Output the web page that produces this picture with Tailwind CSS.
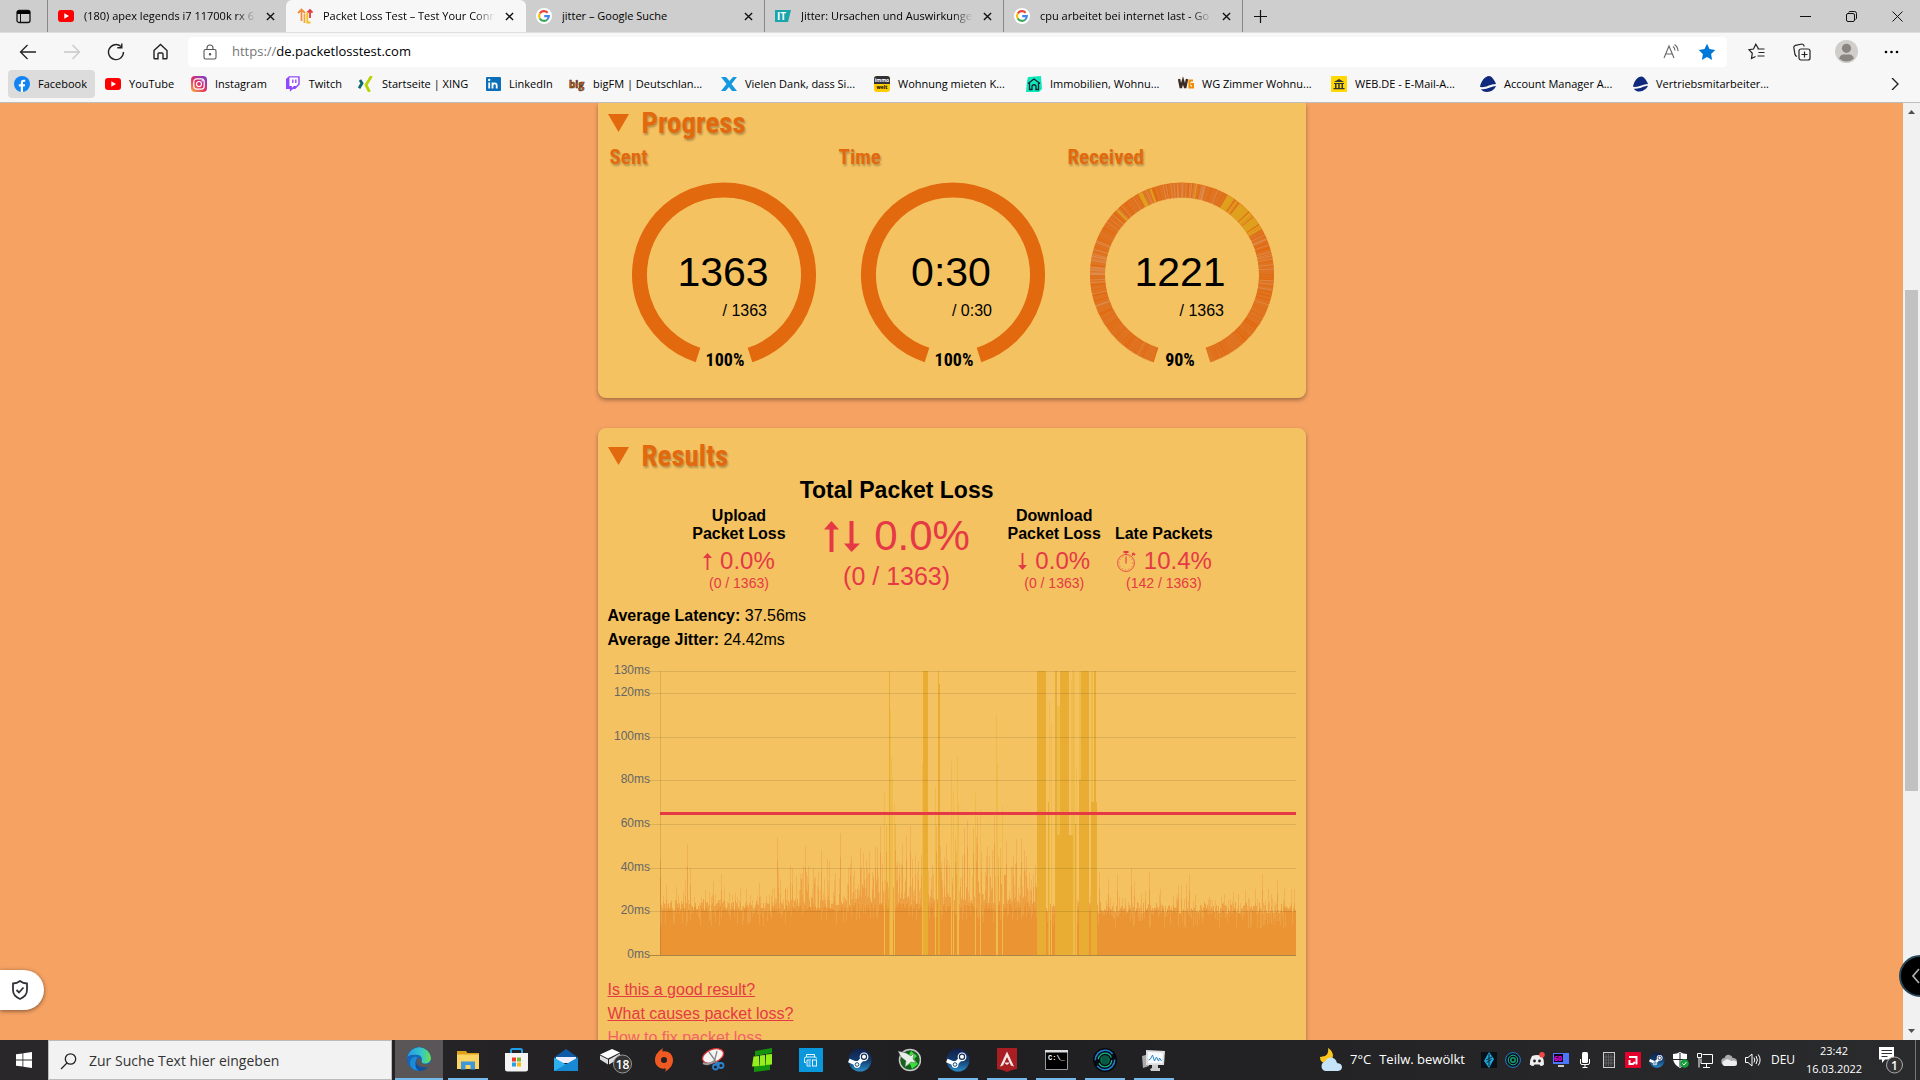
<!DOCTYPE html>
<html lang="de">
<head>
  <meta charset="UTF-8" />
  <meta name="viewport" content="width=device-width, initial-scale=1.0" />
  <title>Packet Loss Test – Test Your Connection</title>
  <script src="https://cdn.jsdelivr.net/npm/@tailwindcss/browser@4"></script>
</head>
<body class="h-screen flex flex-col overflow-hidden bg-[#f7f7f7] text-black font-['Open_Sans',sans-serif]">

  <!-- shared icons -->
  <svg class="absolute size-0">
    <defs><linearGradient id="st" x2="0" y2="1"><stop stop-color="#12204a" /><stop offset=".5" stop-color="#123a6b" /><stop offset="1" stop-color="#2a8cc8" /></linearGradient></defs>
    <symbol id="youtube" viewBox="0 0 16 16"><rect y="2" width="16" height="12" rx="3" fill="#f00" /><path d="M6.3 5.2v5.6L11 8z" fill="#fff" /></symbol>
    <symbol id="google" viewBox="0 0 16 16">
      <circle cx="8" cy="8" r="8" fill="#fff" />
      <g fill="none" stroke-width="2.1"><path d="M11.6 4.7A4.9 4.9 0 0 0 3.8 5.5" stroke="#ea4335" /><path d="M3.8 5.5a4.9 4.9 0 0 0 0 5" stroke="#fbbc05" /><path d="M3.8 10.5a4.9 4.9 0 0 0 7.4 1.2" stroke="#34a853" /><path d="M11.2 11.7A4.9 4.9 0 0 0 12.9 8.1H8.2" stroke="#4285f4" /></g>
    </symbol>
    <symbol id="close" viewBox="0 0 10 10"><path d="M1 1l8 8M9 1L1 9" stroke="#111" stroke-width="1.5" /></symbol>
    <symbol id="steam" viewBox="0 0 24 24">
      <circle cx="12" cy="12" r="11.5" fill="url(#st)" />
      <path d="M.8 12.5l8.5 3.6 5-5" stroke="#fff" stroke-width="4" fill="none" />
      <circle cx="16" cy="8.8" r="4.4" fill="#fff" /><circle cx="16" cy="8.8" r="2.6" fill="none" stroke="#123055" stroke-width="1.2" />
      <circle cx="9" cy="16.5" r="3.4" fill="#fff" /><circle cx="9" cy="16.5" r="1.8" fill="none" stroke="#14527f" stroke-width="1" />
    </symbol>
    <symbol id="stepstone" viewBox="0 0 16 16"><path d="M0 11C1 5 5 0 9 0c3 0 6 5 7 8-6 0-10 4-16 3zM1 13c6 1 9-2.5 15-3-1 3-5 6-9 6-3 0-5-1-6-3z" fill="#10297c" /></symbol>
  </svg>

  <!-- tab strip -->
  <header class="h-8 shrink-0 flex bg-[#cecece] text-[11px]">
    <button class="w-[47px] flex items-center justify-center" aria-label="Tab-Aktionen">
      <svg class="w-[15px] h-[15px]" viewBox="0 0 15 15"><rect x="1" y="1.5" width="13" height="12" rx="2" fill="none" stroke="#111" stroke-width="1.3" /><path d="M1 2h13v3H1z" /><path d="M4.5 5v8" stroke="#111" /></svg>
    </button>
    <nav class="flex">
      <div class="w-[239px] flex items-center gap-2.5 pl-[10px] pr-[11px] border-l border-[#888] bg-[#cecece]">
        <svg class="size-4 shrink-0"><use href="#youtube" /></svg>
        <span class="flex-1 overflow-hidden whitespace-nowrap [mask-image:linear-gradient(90deg,#000_88%,transparent)]">(180) apex legends i7 11700k rx 6</span>
        <button aria-label="Schließen"><svg class="size-[9px]"><use href="#close" /></svg></button>
      </div>
      <div class="w-[240px] flex items-center gap-2.5 pl-[11px] pr-3 rounded-t-md bg-[#f7f7f7]">
        <svg class="size-4 shrink-0" viewBox="0 0 16 16" fill="none" stroke-width="1.8"><path d="M4.500 13V2M1 5l3.500-3.500L8 5" stroke="#f28c3c" /><path d="M7.500 6v9" stroke="#f4a940" /><path d="M13 2v8M10.500 4.500L13 2l2.500 2.500" stroke="#e63946" /><path d="M10.300 4v10.500h3.200" stroke="#f4c020" /></svg>
        <span class="flex-1 overflow-hidden whitespace-nowrap [mask-image:linear-gradient(90deg,#000_88%,transparent)]">Packet Loss Test – Test Your Conn</span>
        <button aria-label="Schließen"><svg class="size-[9px]"><use href="#close" /></svg></button>
      </div>
      <div class="w-[238px] flex items-center gap-2.5 pl-[10px] pr-[11px]">
        <svg class="size-4 shrink-0"><use href="#google" /></svg>
        <span class="flex-1 overflow-hidden whitespace-nowrap">jitter – Google Suche</span>
        <button aria-label="Schließen"><svg class="size-[9px]"><use href="#close" /></svg></button>
      </div>
      <div class="w-[239px] flex items-center gap-2.5 pl-[10px] pr-[11px] border-l border-[#888]">
        <svg class="size-4 shrink-0" viewBox="0 0 16 16"><path d="M0 2h16l-3 12H0z" fill="#18a5ab" /><text x="2" y="12" class="text-[10px] font-bold fill-white">IT</text></svg>
        <span class="flex-1 overflow-hidden whitespace-nowrap [mask-image:linear-gradient(90deg,#000_88%,transparent)]">Jitter: Ursachen und Auswirkunge</span>
        <button aria-label="Schließen"><svg class="size-[9px]"><use href="#close" /></svg></button>
      </div>
      <div class="w-[240px] flex items-center gap-2.5 pl-[10px] pr-[11px] border-x border-[#888]">
        <svg class="size-4 shrink-0"><use href="#google" /></svg>
        <span class="flex-1 overflow-hidden whitespace-nowrap [mask-image:linear-gradient(90deg,#000_88%,transparent)]">cpu arbeitet bei internet last - Go</span>
        <button aria-label="Schließen"><svg class="size-[9px]"><use href="#close" /></svg></button>
      </div>
    </nav>
    <button class="w-[34px] flex items-center justify-center" aria-label="Neuer Tab"><svg class="size-[15px]" viewBox="0 0 15 15"><path d="M7.5 1v13M1 7.5h13" stroke="#111" stroke-width="1.2" /></svg></button>
    <div class="ml-auto flex">
      <button class="w-[46px] flex items-center justify-center" aria-label="Minimieren"><svg class="size-[11px]" viewBox="0 0 11 11"><path d="M0 5.5h11" stroke="#111" /></svg></button>
      <button class="w-[46px] flex items-center justify-center" aria-label="Verkleinern"><svg class="size-[11px]" viewBox="0 0 11 11" fill="none" stroke="#111"><rect x=".5" y="2.5" width="8" height="8" rx="1.5" /><path d="M2.5 1.5Q3 .5 4 .5h4.500q2 0 2 2V7q0 1-1 1.500" /></svg></button>
      <button class="w-[46px] flex items-center justify-center" aria-label="Fenster schließen"><svg class="size-[11px]" viewBox="0 0 11 11"><path d="M.5 .5l10 10M10.5 .5l-10 10" stroke="#111" /></svg></button>
    </div>
  </header>

  <!-- address bar -->
  <div class="h-[38px] shrink-0 flex items-center pl-1.5 pr-[6px] border-t border-[#dedede]">
    <button class="w-11 flex justify-center" aria-label="Zurück"><svg class="size-[18px]" viewBox="0 0 18 18" fill="none" stroke="#222" stroke-width="1.3"><path d="M17 9H2M8.5 2L1.5 9l7 7" /></svg></button>
    <button class="w-11 flex justify-center" aria-label="Vorwärts"><svg class="size-[18px]" viewBox="0 0 18 18" fill="none" stroke="#c8c8c8" stroke-width="1.3"><path d="M1 9h15M9.5 2l7 7-7 7" /></svg></button>
    <button class="w-11 flex justify-center" aria-label="Aktualisieren"><svg class="size-[18px]" viewBox="0 0 18 18" fill="none" stroke="#222" stroke-width="1.4"><path d="M16.5 9A7.5 7.5 0 1 1 14 3.5M14.8 .5v4.300h-4.500" /></svg></button>
    <button class="w-11 flex justify-center" aria-label="Startseite"><svg class="size-[17px]" viewBox="0 0 17 17" fill="none" stroke="#222" stroke-width="1.4"><path d="M2 7.5L8.500 1.500 15 7.500V15q0 .8-.8.8H11V11q0-1-1-1H7q-1 0-1 1v4.800H2.800Q2 15.800 2 15z" /></svg></button>
    <div class="ml-1.5 h-[30px] flex-1 flex items-center rounded bg-white pl-[15px] pr-0.5 text-[13px]">
      <svg class="w-3.5 h-4 shrink-0" viewBox="0 0 14 16" fill="none" stroke="#555" stroke-width="1.1"><rect x="1" y="5.5" width="12" height="9.5" rx="1.5" /><path d="M4 5.500V4a3 3 0 0 1 6 0v1.500" /><circle cx="7" cy="10.3" r=".7" fill="#555" /></svg>
      <label for="url" class="ml-[15px] text-[#767676]">https://</label>
      <input id="url" type="text" value="de.packetlosstest.com" class="flex-1 min-w-0 outline-none" />
      <button class="w-9 flex justify-center" aria-label="Laut vorlesen"><svg class="size-[17px]" viewBox="0 0 17 17" fill="none" stroke="#666" stroke-width="1.1"><path d="M1 15L6 3l5 12M2.700 11h6.600M10 3.500q2 1.500 2 4M11.500 1.500Q15 4 15 8" /></svg></button>
      <button class="w-9 flex justify-center" aria-label="Favorit"><svg class="size-[18px]" viewBox="0 0 18 18"><path d="M9 .8l2.500 5.300 5.800.8-4.200 4.100 1 5.900L9 14.100l-5.100 2.800 1-5.900L.7 6.900l5.800-.8z" fill="#0078d7" /></svg></button>
    </div>
    <div class="ml-[7px] flex items-center">
      <button class="w-[45px] flex justify-center" aria-label="Favoriten"><svg class="size-[17px]" viewBox="0 0 17 17" fill="none" stroke="#222" stroke-width="1.2"><path d="M10.500 5.700L7.800 1.200 5.500 6 1 6.700l3.300 3.600-.8 5.200 4-2M9.500 6h7M10.500 9.500h6M9.500 13h7" /></svg></button>
      <button class="w-[45px] flex justify-center" aria-label="Sammlungen"><svg class="size-[18px]" viewBox="0 0 18 18" fill="none" stroke="#222" stroke-width="1.2"><rect x="6" y="6" width="11" height="11" rx="2" /><path d="M11.500 8.500v6M8.500 11.500h6M4 13.500Q2.500 13 2 11.500L.8 4.500q0-1.700 1.700-2.200L9 1q1.700 0 2.300 2.500" /></svg></button>
      <button class="w-[45px] flex justify-center" aria-label="Profil"><svg class="size-[23px]" viewBox="0 0 23 23"><circle cx="11.5" cy="11.5" r="11.5" fill="#d0cecb" /><circle cx="11.5" cy="8.3" r="4.6" fill="#8a8581" /><path d="M4 18.500q1.500-4 4.500-4h6q3 0 4.500 4A11 11 0 0 1 4 18.500" fill="#8a8581" /></svg></button>
      <button class="w-[45px] flex justify-center" aria-label="Mehr"><svg class="w-[15px] h-1" viewBox="0 0 15 4"><circle cx="2" cy="2" r="1.3" /><circle cx="7.5" cy="2" r="1.3" /><circle cx="13" cy="2" r="1.3" /></svg></button>
    </div>
  </div>

  <!-- bookmarks -->
  <nav class="h-[33px] shrink-0 flex items-center gap-1 pl-2 pb-1 border-b border-[#bdbdbd] text-[11px] whitespace-nowrap">
    <a href="#" class="w-[87px] h-7 flex items-center gap-2 px-1.5 rounded-sm bg-[#dcdcdc]"><svg class="size-4" viewBox="0 0 16 16"><circle cx="8" cy="8" r="8" fill="#1184f5" /><path d="M6.800 16v-5.500h-2V8.200h2V6.500q0-2.800 2.700-2.800h1.700v2H10q-1 0-1 1v1.500h2.100l-.4 2.300H9V16z" fill="#fff" /></svg>Facebook</a>
    <a href="#" class="w-[82px] flex items-center gap-2 px-1.5"><svg class="size-4"><use href="#youtube" /></svg>YouTube</a>
    <a href="#" class="w-[90px] flex items-center gap-2 px-1.5"><svg class="size-4" viewBox="0 0 16 16"><defs><linearGradient id="ig" x1="0" y1="1" x2=".9" y2="0"><stop stop-color="#fdb447" /><stop offset=".5" stop-color="#e02f62" /><stop offset="1" stop-color="#7a3fd0" /></linearGradient></defs><rect width="16" height="16" rx="4" fill="url(#ig)" /><g fill="none" stroke="#fff" stroke-width="1.2"><rect x="2.8" y="2.8" width="10.4" height="10.4" rx="3" /><circle cx="8" cy="8" r="2.5" /></g><circle cx="11.2" cy="4.8" r=".7" fill="#fff" /></svg>Instagram</a>
    <a href="#" class="w-[69px] flex items-center gap-2 px-1.5"><svg class="size-4" viewBox="0 0 16 16"><path d="M1 3l3-3h11v8.500L10.500 13H8l-3 3v-3H1z" fill="#9146ff" /><path d="M4.500 1.500h9V8l-2 2H9l-2 2v-2H4.500z" fill="#fff" /><path d="M8 3.500V7M11 3.500V7" stroke="#9146ff" stroke-width="1.4" /></svg>Twitch</a>
    <a href="#" class="w-[123px] flex items-center gap-2 px-1.5"><svg class="size-4" viewBox="0 0 16 16" fill="none" stroke-width="2.8"><path d="M2 4l2 3.200-3 5" stroke="#0b6a6a" /><path d="M13.500 0L8 9l3.500 7" stroke="#b8d200" /></svg>Startseite | XING</a>
    <a href="#" class="w-[80px] flex items-center gap-2 px-1.5"><svg class="size-4" viewBox="0 0 16 16"><rect x="1" y="1" width="15" height="14" rx="1" fill="#0a6fb8" /><path d="M4.200 6.500v6M7.500 12.500v-6M7.500 9.500q0-2.200 2.200-2.200 2 0 2 2.200v3" stroke="#fff" stroke-width="1.8" fill="none" /><circle cx="4.2" cy="4" r="1.2" fill="#fff" /></svg>LinkedIn</a>
    <a href="#" class="w-[148px] flex items-center gap-2 px-1.5"><svg class="size-4" viewBox="0 0 16 16"><text x="0" y="12" class="text-[10px] font-bold fill-[#e8731c] stroke-[#3a2010] [stroke-width:.6px]">big</text></svg>bigFM | Deutschlan...</a>
    <a href="#" class="w-[149px] flex items-center gap-2 px-1.5"><svg class="size-4" viewBox="0 0 16 16"><path d="M0 1h5l3.500 4L12 1h4l-5.500 7 5.500 7h-5l-3-4-3.500 4H0l5.500-7z" fill="#1499e0" /></svg>Vielen Dank, dass Si...</a>
    <a href="#" class="w-[148px] flex items-center gap-2 px-1.5"><svg class="size-4" viewBox="0 0 16 16"><rect width="16" height="16" rx="3" fill="#fc0" /><path d="M0 8V3q0-3 3-3h10q3 0 3 3v5z" fill="#30323a" /><text x="8" y="6" text-anchor="middle" class="text-[5px] font-bold fill-white">immo</text><text x="8" y="13" text-anchor="middle" class="text-[5px] font-bold fill-black">welt</text></svg>Wohnung mieten K...</a>
    <a href="#" class="w-[148px] flex items-center gap-2 px-1.5"><svg class="size-4" viewBox="0 0 16 16"><path d="M2 1l13-1 1 13-3 3H0L1 5z" fill="#0fe8b8" /><path d="M2 7.500L8 3l6 4.500M3.500 7v6.500h2.500V10q2-2.500 4 0v3.500h2.500V7" fill="none" stroke="#123" stroke-width="1.3" /></svg>Immobilien, Wohnu...</a>
    <a href="#" class="w-[149px] flex items-center gap-2 px-1.5"><svg class="size-4" viewBox="0 0 16 16"><path d="M1 3l1.800 9L5 4.500 7.200 12 9 3" fill="none" stroke="#3d2c22" stroke-width="2.4" /><path d="M15 4.500h-3.500v7H15V8h-2" fill="none" stroke="#f28c00" stroke-width="2.2" /></svg>WG Zimmer Wohnu...</a>
    <a href="#" class="w-[145px] flex items-center gap-2 px-1.5"><svg class="size-4" viewBox="0 0 16 16"><rect width="16" height="16" rx="1" fill="#ffd800" /><path d="M3 6l5-3 5 3zM3 7h10v1H3zM4 8h1.500v4H4zM7.200 8h1.500v4H7.200zM10.500 8H12v4h-1.500zM2.500 12h11v1.300h-11z" fill="#333" /></svg>WEB.DE - E-Mail-A...</a>
    <a href="#" class="w-[149px] flex items-center gap-2 px-1.5"><svg class="size-4"><use href="#stepstone" /></svg>Account Manager A...</a>
    <a href="#" class="w-[148px] flex items-center gap-2 px-1.5"><svg class="size-4"><use href="#stepstone" /></svg>Vertriebsmitarbeiter...</a>
    <button class="ml-auto mr-[21px]" aria-label="Weitere"><svg class="w-2 h-3" viewBox="0 0 8 12"><path d="M1 0l6 6-6 6" fill="none" stroke="#222" stroke-width="1.4" /></svg></button>
  </nav>

  <!-- page -->
  <div class="relative flex-1 min-h-0 flex">
    <main class="flex-1 overflow-hidden bg-[#f6a263] font-['Liberation_Sans',sans-serif]">
      <section class="mx-auto max-w-[708px] pl-2.5 pr-[11px] rounded-b-lg bg-[#f4c261] shadow-[0_2px_4px_rgba(0,0,0,.35)]">
        <h2 class="flex items-center h-10 gap-[13px] text-[29px] leading-10 font-bold text-[#e2690d] font-['Roboto_Condensed',sans-serif] [text-shadow:1px_2px_2px_rgba(0,0,0,.25)]">
          <svg class="w-[21px] h-[18px]" viewBox="0 0 21 18"><path d="M0 0h21L10.5 18z" fill="#e2690d" /></svg>Progress
        </h2>
        <div class="grid grid-cols-3">
          <div>
            <h3 class="pl-0.5 text-[21px] leading-7 font-bold text-[#e2690d] font-['Roboto_Condensed',sans-serif] [text-shadow:1px_2px_2px_rgba(0,0,0,.25)]">Sent</h3>
            <svg class="w-full" viewBox="0 0 229 227">
              <path d="M90 184A84.5 84.5 0 1 1 142 184" fill="none" stroke="#e2690d" stroke-width="15" />
              <text x="115" y="115" text-anchor="middle" class="text-[41px]">1363</text>
              <text x="159" y="145" text-anchor="end" class="text-[16px]">/ 1363</text>
              <text x="117" y="195" text-anchor="middle" class="text-[18px] font-bold font-['Roboto_Condensed',sans-serif]">100%</text>
            </svg>
          </div>
          <div>
            <h3 class="pl-0.5 text-[21px] leading-7 font-bold text-[#e2690d] font-['Roboto_Condensed',sans-serif] [text-shadow:1px_2px_2px_rgba(0,0,0,.25)]">Time</h3>
            <svg class="w-full" viewBox="0 0 229 227">
              <path d="M90 184A84.5 84.5 0 1 1 142 184" fill="none" stroke="#e2690d" stroke-width="15" />
              <text x="114" y="115" text-anchor="middle" class="text-[41px]">0:30</text>
              <text x="155" y="145" text-anchor="end" class="text-[16px]">/ 0:30</text>
              <text x="117" y="195" text-anchor="middle" class="text-[18px] font-bold font-['Roboto_Condensed',sans-serif]">100%</text>
            </svg>
          </div>
          <div>
            <h3 class="pl-0.5 text-[21px] leading-7 font-bold text-[#e2690d] font-['Roboto_Condensed',sans-serif] [text-shadow:1px_2px_2px_rgba(0,0,0,.25)]">Received</h3>
            <svg class="w-full" viewBox="0 0 229 227">
              <path d="M90 184A84.5 84.5 0 1 1 142 184" fill="none" stroke="#e2690d" stroke-width="15" />
              <g id="ticks" fill="none"></g>
              <text x="114" y="115" text-anchor="middle" class="text-[41px]">1221</text>
              <text x="158" y="145" text-anchor="end" class="text-[16px]">/ 1363</text>
              <text x="114" y="195" text-anchor="middle" class="text-[18px] font-bold font-['Roboto_Condensed',sans-serif]">90%</text>
            </svg>
          </div>
        </div>
      </section>

      <section class="mx-auto mt-[30px] max-w-[708px] pl-2.5 pr-2 pt-2 pb-10 rounded-lg bg-[#f4c261] shadow-[0_2px_4px_rgba(0,0,0,.35)]">
        <h2 class="flex items-center h-10 gap-[13px] text-[29px] leading-10 font-bold text-[#e2690d] font-['Roboto_Condensed',sans-serif] [text-shadow:1px_2px_2px_rgba(0,0,0,.25)]">
          <svg class="w-[21px] h-[18px]" viewBox="0 0 21 18"><path d="M0 0h21L10.5 18z" fill="#e2690d" /></svg>Results
        </h2>
        <div class="flex justify-center items-end gap-3.5 text-center text-[#e63946]">
          <div>
            <h4 class="mb-[5px] text-base leading-[18px] font-bold text-black">Upload<br />Packet Loss</h4>
            <p class="flex justify-center items-center gap-2 text-2xl leading-[26px]"><svg class="w-[9px] h-[17px]" viewBox="0 0 9 17"><path d="M4.500 0L9 5H5.400v12H3.600V5H0z" fill="#e63946" /></svg>0.0%</p>
            <p class="text-sm leading-[18px]">(0 / 1363)</p>
          </div>
          <div>
            <h3 class="mb-2 text-[23px] leading-7 font-bold text-black">Total Packet Loss</h3>
            <p class="flex justify-center items-center gap-3.5 text-[42px] leading-[48px]"><svg class="w-[37px] h-[31px]" viewBox="0 0 37 31"><path d="M8.500 0L16 8.500h-5.500V31h-4V8.500H1zM26.500 0h4v22.500H37L28.500 31 21 22.500h5.500z" fill="#e63946" /></svg>0.0%</p>
            <p class="text-[25px] leading-8">(0 / 1363)</p>
          </div>
          <div>
            <h4 class="mb-[5px] text-base leading-[18px] font-bold text-black">Download<br />Packet Loss</h4>
            <p class="flex justify-center items-center gap-2 text-2xl leading-[26px]"><svg class="w-[9px] h-[17px]" viewBox="0 0 9 17"><path d="M4.500 17L9 12H5.400V0H3.600v12H0z" fill="#e63946" /></svg>0.0%</p>
            <p class="text-sm leading-[18px]">(0 / 1363)</p>
          </div>
          <div>
            <h4 class="mb-[5px] text-base leading-[18px] font-bold text-black">Late Packets</h4>
            <p class="flex justify-center items-center gap-2 text-2xl leading-[26px]"><svg class="w-5 h-[21px]" viewBox="0 0 20 21" fill="none" stroke="#e63946" stroke-width=".8"><circle cx="10" cy="12" r="8.5" /><circle cx="10" cy="12" r="6.8" stroke-dasharray=".9 2.6" /><path d="M10 6v6.500M10 4V1M16 4.500l1.500-1.500" stroke-width="1.1" /><path d="M7.500 1h5M16.500 2l2.500 2" stroke-width="2" /></svg>10.4%</p>
            <p class="text-sm leading-[18px]">(142 / 1363)</p>
          </div>
        </div>
        <div class="mt-3 leading-6">
          <p><b>Average Latency:</b> 37.56ms</p>
          <p><b>Average Jitter:</b> 24.42ms</p>
        </div>
        <svg class="mt-2 w-full" viewBox="1 0 690 300" shape-rendering="crispEdges">
          <g id="bars"></g>
          <g id="axis"></g>
          <path d="M53 153.500h636" stroke="#e63946" stroke-width="3" />
        </svg>
        <ul class="mt-[18px] leading-6 text-[#e63946]">
          <li><a href="#" class="underline">Is this a good result?</a></li>
          <li><a href="#" class="underline">What causes packet loss?</a></li>
          <li><a href="#" class="text-[#f4606a]">How to fix packet loss</a></li>
        </ul>
      </section>
    </main>

    <!-- scrollbar -->
    <div class="w-[17px] flex flex-col items-center bg-[#f1f1f1]">
      <svg class="my-[7px] w-[7px] h-1" viewBox="0 0 7 4"><path d="M0 4l3.500-4L7 4z" fill="#505050" /></svg>
      <div class="mt-[169px] w-[13px] h-[501px] bg-[#c1c1c1]"></div>
      <svg class="mt-auto mb-[7px] w-[7px] h-1" viewBox="0 0 7 4"><path d="M0 0l3.500 4L7 0z" fill="#505050" /></svg>
    </div>

    <button class="absolute left-0 bottom-[30px] w-11 h-10 pl-3 flex items-center rounded-r-full bg-white shadow-[0_1px_4px_rgba(0,0,0,.5)]" aria-label="Datenschutz">
      <svg class="w-4 h-5" viewBox="0 0 16 20" fill="none" stroke="#30343a" stroke-width="1.8"><path d="M8 1Q11 3.300 15 3.500V10q0 6-7 9-7-3-7-9V3.500Q5 3.300 8 1z" /><path d="M4.500 10l2.500 2.500 4.500-5" /></svg>
    </button>
    <div class="absolute right-0 bottom-[43px] w-[21px] h-[42px] overflow-hidden">
      <button class="size-[42px] rounded-full border-2 border-[#27485a] bg-black" aria-label="Seitenleiste"><svg class="ml-2.5 size-4" viewBox="0 0 16 16"><path d="M8 1L2 8l6 7" fill="none" stroke="#aaa" stroke-width="1.8" /></svg></button>
    </div>
  </div>

  <!-- taskbar -->
  <footer class="h-10 shrink-0 flex text-white bg-linear-to-r from-[#29272a] via-[#1f1e20] to-[#2a2b2d]">
    <button class="w-12 flex items-center justify-center" aria-label="Start"><svg class="size-4" viewBox="0 0 16 16"><path d="M0 2.300l6.500-.9v6.200H0zM7.300 1.300L16 0v7.600H7.300zM0 8.400h6.500v6.200L0 13.700zM7.300 8.400H16V16l-8.700-1.300z" fill="#fff" /></svg></button>
    <div class="w-[344px] flex items-center gap-3 pl-[11px] pt-0.5 border border-[#bbb] bg-[#f2f2f2]">
      <svg class="size-[17px]" viewBox="0 0 17 17" fill="none" stroke="#222" stroke-width="1.3"><circle cx="10.5" cy="6" r="5.2" /><path d="M7 10L1 16" /></svg>
      <input type="text" aria-label="Suche" placeholder="Zur Suche Text hier eingeben" class="flex-1 min-w-0 outline-none text-sm text-[#333] placeholder:text-[#333]" />
    </div>
    <div class="ml-[3px] flex">
      <button class="w-12 mr-[1px] flex items-center justify-center bg-[#5a5657] border-b-2 border-[#76b9ed]" aria-label="Edge"><svg class="size-6" viewBox="0 0 24 24"><defs><linearGradient id="eg" y1="0" x2="1"><stop offset=".1" stop-color="#2a9ee0" /><stop offset=".6" stop-color="#34c8c8" /><stop offset="1" stop-color="#6be04a" /></linearGradient></defs><circle cx="12" cy="12" r="12" fill="#1565b8" /><path d="M.3 10A12 12 0 0 1 24 11c0 3.500-3 5.500-6 5.500-3 0-4-1-3.500-2 1-2 .5-6-3.500-6.500C6 7.200 2 8 .3 10z" fill="url(#eg)" /><path d="M9 13c-2 5 3 9 8 8.500-6 4-13.500 1.500-14-5C2.800 12 7 9 9.500 10c1 .3.500 1.500-.5 3z" fill="#1b8bd8" /><path d="M14.500 14.500c0 3 5 3.500 9.500 1.500v8h-8c-3-2-7.500-5.500-6.700-10 .3-1.500 1.200-2.500 2-3 2.200 1 2.700 2 3.200 3.500z" fill="#5a5657" /><path d="M9.300 14c-.6 4 3.500 7.500 11.500 6-2.500 3-5.500 4-8.500 4C8.500 22.500 7.500 17.500 9.300 14z" fill="#0c50a0" /></svg></button>
      <button class="w-10 mx-[4px] pt-0.5 flex items-center justify-center border-b-2 border-[#76b9ed]" aria-label="Explorer"><svg class="w-[22px] h-[19px]" viewBox="0 0 22 19"><path d="M0 0h9l1.500 2H22v16H0z" fill="#e0a11a" /><path d="M0 3.500h22V18H0z" fill="#fbd463" /><path d="M4 18.500v-8h14v8h-4.500V14h-5v4.500z" fill="#3f96d8" /></svg></button>
      <button class="w-[49px] flex items-center justify-center" aria-label="Store"><svg class="w-[23px] h-6" viewBox="0 0 23 24"><path d="M6 6V2.500Q6 1 7.500 1h8Q17 1 17 2.500V6" fill="none" stroke="#1f9fe8" stroke-width="2" /><path d="M0 5h23v16q0 2.500-2.500 2.500h-18Q0 23.500 0 21z" fill="#f4f4f4" /><path d="M7 9.500h4v4H7z" fill="#f03a2a" /><path d="M12 9.500h4v4h-4z" fill="#7db82a" /><path d="M7 14.500h4v4H7z" fill="#2aa0e0" /><path d="M12 14.500h4v4h-4z" fill="#f8bb10" /></svg></button>
      <button class="w-[49px] flex items-center justify-center" aria-label="Mail"><svg class="w-6 h-[22px]" viewBox="0 0 24 22"><path d="M0 8.500L12 0l12 8.500z" fill="#0f5aa8" /><path d="M2 8h20v6H2z" fill="#eef" /><path d="M0 8.500l12 7 12-7V22H0z" fill="#2fb0ee" /><path d="M0 22L24 8.500V22z" fill="#1788d4" /></svg></button>
      <button class="w-[49px] flex items-center justify-center" aria-label="Pakete"><svg class="w-[34px] h-7" viewBox="0 0 34 28"><path d="M2 8.500L14 3l8 3.500-12 6z" fill="#fff" /><path d="M2 9.500l8 4v5l-8-5zM11 13.500l11-6v4.500l-11 6.500z" fill="#ddd" /><circle cx="24.5" cy="18" r="9" fill="#333" stroke="#999" /><text x="24.500" y="22.500" text-anchor="middle" class="text-[12px] font-semibold fill-white">18</text></svg></button>
      <button class="w-[49px] flex items-center justify-center" aria-label="Origin"><svg class="w-[18px] h-6" viewBox="0 0 18 24"><path fill-rule="evenodd" d="M8 0q-1 2-.5 3.500C14 2.500 18 7 18 12c0 6-4 9-8 12 1-2 1-3 .5-3.500C4 21.500 0 17 0 12 0 6 4 3 8 0zM9 9a3 3 0 1 0 0 6 3 3 0 0 0 0-6z" fill="#f05a22" /></svg></button>
      <button class="w-[49px] flex items-center justify-center" aria-label="Snipping Tool"><svg class="size-6" viewBox="0 0 24 24"><ellipse cx="12" cy="8" rx="11" ry="6.5" transform="rotate(-22 12 8)" fill="#f5f5f5" stroke="#d33" stroke-width="1.3" /><path d="M2 15q6 3 11-2" stroke="#999" stroke-width="2" fill="none" /><path d="M8 4l8 11M16 3l-3 12" stroke="#888" stroke-width="1.3" /><g fill="none" stroke="#2b82cc" stroke-width="1.8"><circle cx="14.5" cy="19" r="2.5" /><circle cx="20" cy="17.5" r="2.5" /><path d="M14 16.500l3-2 1.500 1" /></g></svg></button>
      <button class="w-[49px] flex items-center justify-center" aria-label="Balken"><svg class="w-5 h-6" viewBox="0 0 20 24"><path d="M3 3l17-3v5L3 8zM2 18l16-2v6L2 24z" fill="#14930f" /><path d="M1.500 8.500L7 8v10l-7 .5zM8 7.500l5-.5v10.500l-5.500.5zM14 6.500l6-.5v10.500l-6.500.5z" fill="#93f01a" /></svg></button>
      <button class="w-[49px] flex items-center justify-center" aria-label="Drucker"><svg class="size-6" viewBox="0 0 24 24"><path d="M0 0h24v24H0z" fill="#0a98dc" /><g fill="none" stroke="#fff" stroke-width=".9"><path d="M7.500 9V6.500h8V9M7 14.500H5.500v-4Q5.500 9 7 9h9q1.500 0 1.500 1.500M12 12H8v6h4" /><rect x="13.5" y="12" width="4" height="6" /><path d="M9.500 14h2M9.500 16h2" /></g></svg></button>
      <button class="w-[49px] flex items-center justify-center" aria-label="Steam"><svg class="size-6"><use href="#steam" /></svg></button>
      <button class="w-[49px] flex items-center justify-center" aria-label="Afterburner"><svg class="size-6" viewBox="0 0 24 24"><circle cx="13" cy="12" r="10.5" fill="#15611c" stroke="#c8c8c8" stroke-width="1.5" /><path d="M14 3l6 5-3 3 4 5-6 5-2-5-5 3 1-6z" fill="#3ce03c" /><path d="M1 3l8 2 5 3 3-3-1 6 3 4-5-1-6 5 1-6-5-4z" fill="#e8eee8" stroke="#555" stroke-width=".5" /></svg></button>
      <button class="w-10 mx-[5px] pt-0.5 flex items-center justify-center border-b-2 border-[#76b9ed]" aria-label="Steam"><svg class="size-6"><use href="#steam" /></svg></button>
      <button class="w-10 mx-[4px] pt-0.5 flex items-center justify-center border-b-2 border-[#76b9ed]" aria-label="Apex Legends"><svg class="w-5 h-6" viewBox="0 0 20 24"><path d="M0 0h20v21l-5 1-5 2-5-2-5-1z" fill="#a81e22" /><path d="M10 3.500L3 18.500l3-1 4-8.500 4 8.500 3 1z" fill="#f2e8e8" /><path d="M7 14.500h6l-3 2.500z" fill="#f2e8e8" /></svg></button>
      <button class="w-10 mx-[5px] pt-0.5 flex items-center justify-center border-b-2 border-[#76b9ed]" aria-label="Eingabeaufforderung"><svg class="w-[23px] h-5" viewBox="0 0 23 20"><path d="M.5 .5h22v19H.5z" stroke="#999" /><path d="M0 0h23v2.500H0z" fill="#ddd" /><text x="3" y="10" class="text-[7px] font-bold fill-white font-['Liberation_Mono',monospace]">C:\_</text></svg></button>
      <button class="w-10 mx-[4px] pt-0.5 flex items-center justify-center border-b-2 border-[#76b9ed]" aria-label="Monitor"><svg class="size-6" viewBox="0 0 24 24" fill="none"><circle cx="12" cy="12" r="12" fill="#060a10" /><circle cx="12" cy="12" r="9.7" stroke="#1e7fd0" stroke-width="1.6" stroke-dasharray="24 6" /><circle cx="12" cy="12" r="6.8" stroke="#16b890" stroke-width="1.2" stroke-dasharray="18 4" /><circle cx="12" cy="12" r="4.8" fill="#0c6e50" /><path d="M10 8v8M12 7.500v9M14 8v8" stroke="#043" /></svg></button>
      <button class="w-10 mx-[5px] pt-0.5 flex items-center justify-center border-b-2 border-[#76b9ed]" aria-label="Task-Manager"><svg class="w-6 h-[22px]" viewBox="0 0 24 22"><path d="M0 7l7-2v12l-6 2z" fill="#aaa" /><path d="M4 1l19 1-1 14H4z" fill="#ddd" /><path d="M6 3l15 .8-.7 10.500H6z" fill="#f7fbff" /><path d="M6.500 11l2-1 2-4 2 6 2-4 2 4 1-3 2 3" fill="none" stroke="#2d86c8" /><path d="M10 16h6v3h2v3H9l-1-2 2-1z" fill="#ccc" /></svg></button>
    </div>

    <div class="ml-auto flex items-center">
      <button class="w-[157px] flex items-center gap-2 text-[13px] whitespace-nowrap"><svg class="w-[22px] h-6" viewBox="0 0 22 24"><path d="M8 0q1 6-3 8L0 9q0 6 6 6 7-1 7-8Q12 2 8 0z" fill="#fbc61c" /><path d="M5 23a5 5 0 0 1 0-9.500Q8 8 13 10q3 1 4 5 5 .5 5 4t-4 4z" fill="#c5e4f8" /></svg><span>7°C</span><span>Teilw. bewölkt</span></button>
      <div class="flex">
        <svg class="w-6 h-4" viewBox="-4 0 24 16"><path d="M0 0h16v16H0z" fill="#0a1018" /><path d="M8 0l5 7-5 9-5-7z" fill="#1fa8dc" /><path d="M8 2v12M5 8l6-3M5.500 10.500l5-3" stroke="#06222e" /></svg>
        <svg class="w-6 h-4" viewBox="-4 0 24 16" fill="none"><circle cx="8" cy="8" r="7.4" fill="#081218" stroke="#1e7fd0" /><circle cx="8" cy="8" r="4.8" stroke="#18b890" /><circle cx="8" cy="8" r="2.2" stroke="#18a070" stroke-width="1.5" /></svg>
        <svg class="w-6 h-4" viewBox="-4 0 24 16"><path d="M3 4q5-2 10 0 2.500 4 2 8.500-1.500 1.500-3.500 1.500l-1-1.500H5.500l-1 1.500Q2.500 14 .8 12.500.5 8 3 4z" fill="#eee" /><circle cx="5.5" cy="9" r="1.4" fill="#222" /><circle cx="10.5" cy="9" r="1.4" fill="#222" /><circle cx="13" cy="2.8" r="2.8" fill="#f04747" /></svg>
        <svg class="w-6 h-4" viewBox="-4 0 24 16"><path d="M0 1h16v11H0z" fill="#4a78ff" /><path d="M1 2h9v8H1z" fill="#14001c" /><path d="M5 13h6v2H5z" fill="#ccc" /><text x="1" y="9" class="text-[7px] font-bold fill-[#f0f]">60</text></svg>
        <svg class="w-6 h-4" viewBox="-4 0 24 16"><rect x="5" y="0" width="6" height="11" rx="1.5" fill="#fff" /><path d="M3.500 7v4q0 1.500 1.500 1.500h6q1.500 0 1.500-1.500V7M8 12.500V15M5.500 15.500h5" fill="none" stroke="#fff" /></svg>
        <svg class="w-6 h-4" viewBox="-4 0 24 16"><rect x="2.5" y=".5" width="11" height="15" fill="#333" stroke="#ccc" /><path d="M5 2v12M7.500 2v12M10 2v12M3 5h10M3 8h10M3 11h10" stroke="#777" stroke-width=".6" /></svg>
        <svg class="w-6 h-4" viewBox="-4 0 24 16"><path d="M0 0h16v16H0z" fill="#e4002b" /><path d="M4 5h7.500v7.500M4.500 8v4h3.500l2-2" stroke="#fff" stroke-width="1.9" fill="none" /></svg>
        <svg class="w-6 h-4" viewBox="-6 0 36 24"><use href="#steam" width="24" height="24" /></svg>
        <svg class="w-6 h-4" viewBox="-4 0 24 16"><path d="M7 0q3 2 7 2v4q0 6-7 10Q0 12 0 6V2q4 0 7-2z" fill="#fff" /><path d="M7 1v14M0 7.500h14" stroke="#222" /><circle cx="11.5" cy="11.5" r="4.3" fill="#16a03c" /><path d="M9.500 11.500l1.500 1.500 2.500-3" stroke="#fff" fill="none" /></svg>
        <svg class="w-6 h-4" viewBox="-4 0 24 16" fill="none" stroke="#fff"><path d="M5.500 2.500h10v9H4v-5M9.500 11.500v3.500M6 15.500h7M2 5.500v10" /><path d="M.5 1.500h4v4h-4z" /></svg>
        <svg class="w-6 h-4" viewBox="-4 0 24 16"><path d="M4 13a3.500 3.500 0 0 1-.5-7Q5 2 8.500 3q2.500.5 3.300 3Q16 6 16 9.500T13 13z" fill="#aaa" /><path d="M3 14a3 3 0 0 1 .5-5.500Q7 6 10 9l3-.5q3 .5 3 3T13.500 14z" fill="#eee" /></svg>
        <svg class="w-6 h-4" viewBox="-4 0 24 16" fill="none" stroke="#fff"><path d="M.5 5.500H3l4-3.500v12L3 10.500H.5zM9 5.500q1.500 2.500 0 5M11 4q2.800 4 0 8M13.200 2.500q3.800 5.500 0 11" /></svg>
      </div>
      <span class="w-9 text-center text-[12px]">DEU</span>
      <div class="w-[66px] text-center text-[11px] leading-[18px]">23:42<br />16.03.2022</div>
      <button class="w-12 flex justify-center" aria-label="Benachrichtigungen"><svg class="w-7 h-7" viewBox="0 0 28 28"><path d="M2 1h15v12.500H8L5 17v-3.500H2z" fill="#fff" /><path d="M4.500 4.500H15M4.500 7.500H15M4.500 10.500h6" stroke="#333" /><circle cx="17.5" cy="19" r="8" fill="#333" stroke="#aaa" /><text x="17.500" y="23.500" text-anchor="middle" class="text-[12px] font-semibold fill-white">1</text></svg></button>
      <div class="w-[5px] h-10 border-l border-[#777]"></div>
    </div>
  </footer>

  <script>
    // latency per chart column, 636 columns over 30 seconds
    const COLS = 636;
    const LATE = 65;
    let seed = 7;
    const rnd = () => (seed = (seed * 16807) % 2147483647) / 2147483647;

    // single spikes: column -> ms
    const spikes = {
      0: 44, 6: 32, 16: 31, 25: 34, 27: 51, 30: 40, 53: 34, 61: 37, 64: 31, 80: 30, 86: 30, 99: 33, 112: 30,
      117: 54, 118: 39, 120: 35, 130: 41, 132: 40, 140: 37, 145: 50, 146: 38, 147: 36, 158: 38, 161: 48, 168: 34,
      174: 34, 179: 35, 180: 56, 188: 40, 190: 40, 193: 36, 200: 49, 206: 44, 209: 47, 212: 38, 215: 50, 217: 49,
      220: 59, 222: 42, 224: 75, 226: 59, 229: 130, 230: 112, 231: 90, 232: 81, 234: 69, 235: 60, 237: 43, 242: 51,
      246: 55, 250: 59, 252: 44, 255: 46, 258: 43, 261: 46, 262: 88, 276: 59, 275: 77, 278: 130, 279: 124, 280: 50,
      286: 51, 291: 89, 293: 75, 295: 53, 297: 91, 298: 70, 302: 45, 304: 58, 307: 62, 313: 58, 315: 74, 316: 54,
      317: 63, 320: 67, 321: 47, 327: 50, 334: 63, 336: 110, 337: 88, 338: 45, 340: 49, 342: 68, 346: 52, 353: 45,
      356: 53, 361: 53, 364: 48, 366: 45, 375: 41, 439: 38, 448: 35, 457: 37, 471: 40, 474: 34, 489: 38, 500: 30,
      518: 32, 521: 32, 526: 33, 529: 37, 535: 28, 573: 29, 578: 28, 595: 30, 602: 37, 608: 30, 617: 35, 624: 30,
      631: 30, 634: 30
    };
    // blocks where every packet was late: [from, to, ms, full strength]
    const blocks = [
      [263, 268, 130, true], [377, 379, 130, false], [379, 385, 130, true], [385, 386, 92, false],
      [389, 390, 116, false], [391, 392, 106, false], [395, 397, 130, true], [397, 400, 114, false],
      [400, 409, 130, true], [411, 412, 126, false], [412, 415, 130, false], [416, 417, 85, false],
      [419, 421, 130, false], [421, 429, 130, true], [431, 433, 130, false], [434, 436, 130, true]
    ];

    const px = ms => Math.round(ms * 2.1846);
    const paths = { "#f0b053": "", "#eda143": "", "#ea9433": "", "#efbb4b": "", "#eaad33": "" };
    const bar = (color, x, w, ms) => {
      const h = px(Math.min(ms, 130));
      paths[color] += `M${53 + x} ${295 - h}h${w}v${h}h${-w}z`;
    };

    const late = [];
    for (let x = 0; x < COLS; x++) {
      const busy = x > 190 && x < 377 ? 1 : x > 120 && x <= 190 ? 0.4 : 0;
      const calm = x > 437;
      const solid = (calm ? 18 : 19) + busy * 2 + (rnd() < 0.35 ? -rnd() * 6 : rnd() * 3);
      const mid = Math.max(solid, (calm ? 19 : 20) + busy * 3) + rnd() * 4 + (rnd() < 0.4 * busy ? rnd() * 12 : 0);
      const top = mid + (rnd() < 0.35 ? rnd() * 6 : 0) + (rnd() < 0.45 * busy ? rnd() * 18 : 0);
      const spike = spikes[x] || 0;
      const early = spike < LATE ? spike : 0;
      bar("#f0b053", x, 1, Math.max(top, early));
      bar("#eda143", x, 1, Math.max(mid, early * 0.8));
      bar("#ea9433", x, 1, solid);
      if (spike > 120) bar("#eaad33", x, 1, spike);
      else if (spike >= LATE) bar("#efbb4b", x, 1, spike);
      late[x] = spike > 100;
    }
    blocks.forEach(([from, to, ms, full]) => {
      bar(full ? "#eaad33" : "#efbb4b", from, to - from, ms);
      for (let x = from; x < to; x++) late[x] = true;
    });
    // the lower part of the long late block is solid
    [[377, 386, 130], [388, 389, 70], [395, 413, 55], [415, 416, 60], [419, 429, 80], [431, 437, 70]].forEach(([from, to, ms]) => bar("#eaad33", from, to - from, ms));
    document.getElementById("bars").innerHTML = Object.entries(paths).map(([fill, d]) => `<path d="${d}" fill="${fill}"/>`).join("");

    // grid lines and labels
    let axis = '<path d="M53.5 11v284" stroke="#000" stroke-opacity=".1"/>';
    [0, 20, 40, 60, 80, 100, 120, 130].forEach(ms => {
      const y = 295 - px(ms);
      axis += `<path d="M43 ${y + 0.5}h646" stroke="#000" stroke-opacity="${ms ? 0.1 : 0.3}"/>`;
      axis += `<text x="43" y="${y + 3}" text-anchor="end" class="text-[12px] fill-[#666]">${ms}ms</text>`;
    });
    document.getElementById("axis").innerHTML = axis;

    // received ring: one tick per column, clockwise from the bottom gap
    const ring = { "#dd7c30": "", "#dba070": "", "#dfa01e": "" };
    for (let x = 0; x < COLS; x++) {
      const a = (198 + (x / COLS) * 324) * Math.PI / 180;
      const sin = Math.sin(a), cos = Math.cos(a);
      const pale = Math.abs(cos) < 0.4 ? 0.16 : x > 260 && x < 370 ? 0.18 : 0.02;
      const color = late[x] ? "#dfa01e" : rnd() < pale ? "#dba070" : "#dd7c30";
      if (color === "#dd7c30" && rnd() < 0.3) continue;
      ring[color] += `M${116 + 77 * sin} ${104 - 77 * cos}L${116 + 92 * sin} ${104 - 92 * cos}`;
    }
    document.getElementById("ticks").innerHTML = Object.entries(ring).map(([stroke, d]) => `<path d="${d}" stroke="${stroke}" stroke-width="${stroke === "#dfa01e" ? 1.2 : 0.6}"/>`).join("");
  </script>
</body>
</html>
